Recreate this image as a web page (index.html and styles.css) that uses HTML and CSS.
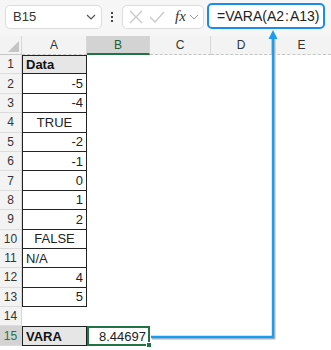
FILE: index.html
```html
<!DOCTYPE html>
<html lang="en">
<head>
  <meta charset="UTF-8">
  <meta name="viewport" content="width=device-width, initial-scale=1.0">
  <title>VARA</title>
  <link rel="stylesheet" href="styles.css">
</head>

<body>
  <div class="page">
    <div class="toolbar">
      <div class="namebox">
        <span>B15</span>
        <svg width="10" height="6" viewBox="0 0 10 6"><path d="M1 1 L5 5 L9 1" fill="none" stroke="#555" stroke-width="1.2"/></svg>
      </div>
      <div class="dots"><i></i><i></i><i></i></div>
      <div class="fx-buttons">
        <svg width="14" height="14" viewBox="0 0 14 14"><path d="M1 1 L13 13 M13 1 L1 13" stroke="#c8c8c8" stroke-width="1.3"/></svg>
        <svg width="16" height="14" viewBox="0 0 16 14"><path d="M1 7 L6 12 L15 2" fill="none" stroke="#c8c8c8" stroke-width="1.3"/></svg>
        <span class="fx">fx</span>
        <svg width="10" height="6" viewBox="0 0 10 6"><path d="M1 1 L5 5 L9 1" fill="none" stroke="#999" stroke-width="1"/></svg>
      </div>
      <div class="formula">=VARA(A2<span class="colon">:</span>A13)</div>
    </div>

    <div class="sheet">
      <div class="corner"><span class="tri"></span></div>
      <div class="colhead">A</div>
      <div class="colhead active">B</div>
      <div class="colhead">C</div>
      <div class="colhead">D</div>
      <div class="colhead last">E</div>

      <div class="rowhead">1</div>
      <div class="cell box first head">Data</div>
      <div class="cell"></div><div class="cell"></div><div class="cell"></div><div class="cell"></div>

      <div class="rowhead">2</div>
      <div class="cell box num">-5</div>
      <div class="cell"></div><div class="cell"></div><div class="cell"></div><div class="cell"></div>

      <div class="rowhead">3</div>
      <div class="cell box num">-4</div>
      <div class="cell"></div><div class="cell"></div><div class="cell"></div><div class="cell"></div>

      <div class="rowhead">4</div>
      <div class="cell box mid">TRUE</div>
      <div class="cell"></div><div class="cell"></div><div class="cell"></div><div class="cell"></div>

      <div class="rowhead">5</div>
      <div class="cell box num">-2</div>
      <div class="cell"></div><div class="cell"></div><div class="cell"></div><div class="cell"></div>

      <div class="rowhead">6</div>
      <div class="cell box num">-1</div>
      <div class="cell"></div><div class="cell"></div><div class="cell"></div><div class="cell"></div>

      <div class="rowhead">7</div>
      <div class="cell box num">0</div>
      <div class="cell"></div><div class="cell"></div><div class="cell"></div><div class="cell"></div>

      <div class="rowhead">8</div>
      <div class="cell box num">1</div>
      <div class="cell"></div><div class="cell"></div><div class="cell"></div><div class="cell"></div>

      <div class="rowhead">9</div>
      <div class="cell box num">2</div>
      <div class="cell"></div><div class="cell"></div><div class="cell"></div><div class="cell"></div>

      <div class="rowhead">10</div>
      <div class="cell box mid">FALSE</div>
      <div class="cell"></div><div class="cell"></div><div class="cell"></div><div class="cell"></div>

      <div class="rowhead">11</div>
      <div class="cell box">N/A</div>
      <div class="cell"></div><div class="cell"></div><div class="cell"></div><div class="cell"></div>

      <div class="rowhead">12</div>
      <div class="cell box num">4</div>
      <div class="cell"></div><div class="cell"></div><div class="cell"></div><div class="cell"></div>

      <div class="rowhead">13</div>
      <div class="cell box num">5</div>
      <div class="cell"></div><div class="cell"></div><div class="cell"></div><div class="cell"></div>

      <div class="rowhead">14</div>
      <div class="cell"></div>
      <div class="cell"></div><div class="cell"></div><div class="cell"></div><div class="cell"></div>

      <div class="rowhead active">15</div>
      <div class="cell box first head">VARA</div>
      <div class="cell num selected">8.44697<span class="handle"></span></div>
      <div class="cell"></div><div class="cell"></div><div class="cell"></div>
    </div>

    <svg class="connector" width="331" height="350" viewBox="0 0 331 350">
      <path d="M152 338.5 H274.5 V38" fill="none" stroke="#b8b8b8" stroke-width="2"/>
      <path d="M151 337 H273 V37" fill="none" stroke="#1a9cf3" stroke-width="2.4"/>
      <path d="M273 30 L268.5 39 L277.5 39 Z" fill="#1a9cf3"/>
    </svg>
  </div>
</body>
</html>
```

FILE: styles.css
```css
* {
  box-sizing: border-box;
}

body {
  margin: 0;
  background: #fff;
  font-family: 'Liberation Sans', Arial, sans-serif;
  color: #222;
}

.page {
  position: relative;
  width: 331px;
  height: 350px;
  overflow: hidden;
}

.toolbar {
  display: flex;
  align-items: center;
  height: 36px;
  padding: 0 4px 3px 5px;
  background: #f6f6f6;
}

.namebox {
  display: flex;
  align-items: center;
  justify-content: space-between;
  width: 97px;
  height: 24px;
  padding: 0 5px 0 7px;
  background: #fff;
  border: 1px solid #dcdcdc;
  border-radius: 5px;
  font-size: 13px;
  color: #333;
}

.dots {
  display: flex;
  flex-direction: column;
  gap: 2px;
  margin: 0 9px 0 9px;
}

.dots i {
  display: block;
  width: 2px;
  height: 2px;
  background: #444;
}

.fx-buttons {
  display: flex;
  align-items: center;
  gap: 6px;
  width: 82px;
  height: 24px;
  padding: 0 4px 0 6px;
  background: #fff;
  border: 1px solid #dcdcdc;
  border-radius: 5px;
}

.fx {
  font-family: 'Liberation Serif', serif;
  font-style: italic;
  font-size: 15px;
  color: #333;
  margin-left: 4px;
  margin-right: -3px;
}

.formula {
  display: flex;
  align-items: center;
  width: 118px;
  height: 26px;
  margin-left: 3px;
  margin-top: -2px;
  padding-left: 8px;
  background: #fff;
  border: 2px solid #1a8cf0;
  border-radius: 5px;
  font-size: 14px;
  color: #222;
}

.colon {
  margin: 0 1px;
}

.sheet {
  display: grid;
  grid-template-columns: 22px 65px 63px 61px 61px 59px;
  grid-template-rows: 19px repeat(15, 19.4px);
  font-size: 13px;
}

.corner {
  position: relative;
  background: #f3f3f3;
  border-right: 1px solid #d6d6d6;
  border-bottom: 1px solid #c6c6c6;
}

.tri {
  position: absolute;
  right: 2px;
  bottom: 2px;
  width: 0;
  height: 0;
  border-left: 11px solid transparent;
  border-bottom: 11px solid #c4c4c4;
}

.colhead {
  display: flex;
  align-items: center;
  justify-content: center;
  background: #f3f3f3;
  border-right: 1px solid #d6d6d6;
  border-bottom: 1px dashed #c6c6c6;
  font-size: 12px;
  color: #333;
}

.colhead.last {
  border-right: none;
}

.colhead.active {
  background: #d3d3d3;
  border-bottom: 2px solid #217346;
  color: #1e5e3a;
}

.rowhead {
  display: flex;
  align-items: center;
  justify-content: center;
  background: #f3f3f3;
  border-right: 1px solid #d6d6d6;
  border-bottom: 1px solid #dcdcdc;
  font-size: 12px;
  color: #333;
}

.rowhead.active {
  background: #d3d3d3;
  color: #217346;
}

.cell {
  display: flex;
  align-items: center;
  padding: 0 3px;
  white-space: nowrap;
}

.box {
  border: 1px solid #222;
  border-top: none;
}

.box.first {
  border-top: 1px solid #222;
}

.head {
  background: #e6e6e6;
  font-weight: bold;
  color: #111;
}

.num {
  justify-content: flex-end;
}

.mid {
  justify-content: center;
}

.selected {
  position: relative;
  border: 2px solid #217346;
  padding-right: 2px;
}

.handle {
  position: absolute;
  right: -4px;
  bottom: -4px;
  width: 6px;
  height: 6px;
  background: #217346;
  border: 1px solid #fff;
}

.connector {
  position: absolute;
  left: 0;
  top: 0;
  pointer-events: none;
}
```
